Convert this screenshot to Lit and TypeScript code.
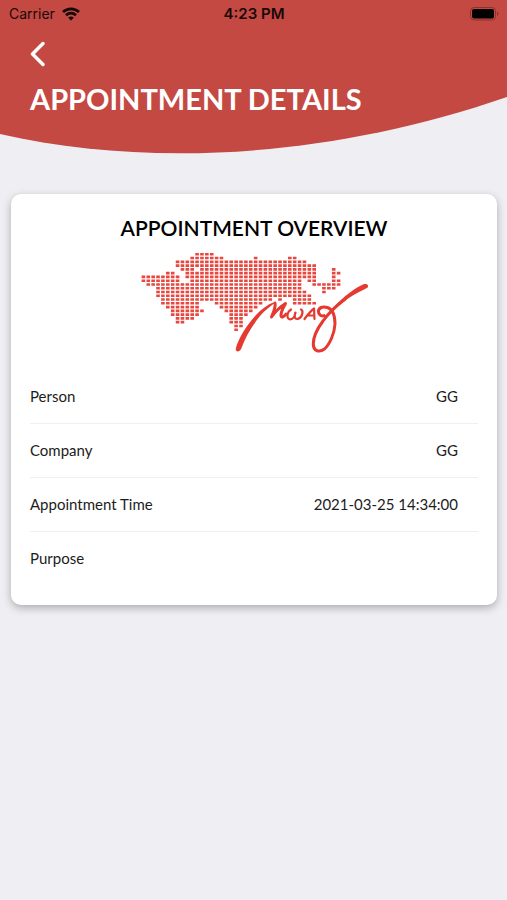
import { LitElement, html, svg, css } from "lit";
import { customElement, property } from "lit/decorators.js";

// Each entry: grid row of the emblem, then inclusive column spans.
const DOT_ROWS: number[][][] = [
  [[11, 14]],
  [[10, 16], [23, 23], [30, 31]],
  [[7, 33]],
  [[7, 35]],
  [[8, 10], [12, 35], [39, 39]],
  [[5, 6], [9, 35], [39, 40]],
  [[0, 7], [9, 35], [39, 39]],
  [[0, 7], [10, 32], [34, 35], [39, 40]],
  [[1, 32], [35, 40]],
  [[3, 32], [37, 39]],
  [[3, 33], [37, 37]],
  [[3, 34]],
  [[4, 26], [28, 28], [31, 34]],
  [[4, 11], [15, 24], [31, 35]],
  [[5, 11], [16, 23]],
  [[6, 12], [17, 22]],
  [[6, 11], [18, 21]],
  [[7, 10], [18, 20]],
  [[7, 8], [18, 20]],
  [[19, 20]],
  [[19, 19]],
];

@customElement("brand-emblem")
class BrandEmblem extends LitElement {
  static styles = css`
    :host { display: block; width: 228px; }
    svg { display: block; width: 100%; }
  `;
  render() {
    const d = DOT_ROWS.map((spans, r) =>
      spans.map(([a, b]) => {
        let s = "";
        for (let c = a; c <= b; c++)
          s += `M${(1.6 + c * 4.88).toFixed(2)} ${(1 + r * 3.77).toFixed(2)}h3.6v2.6h-3.6z`;
        return s;
      }).join("")).join("");
    return html`<svg viewBox="0 0 228 101" role="img" aria-label="MWAG">
      ${svg`<path d=${d} fill="#e8473f"/>
      <path fill="#e53a31" d="M96 96C98 87 108 71 118 61C124 55 130 51 136 50C131 54 125 58 120 64C111 75 105 86 101.500 96C100 101 94.500 100 96 96Z"/>
      <g fill="none" stroke="#e53a31" stroke-linecap="round" stroke-linejoin="round">
        <path stroke-width="3" d="M135 51C136 55 134 59 131.500 65C135 60 140 55 145.500 51.500C143 56 140.500 60 141 64C141.500 66 144 65 146 62"/>
        <path stroke-width="2.200" d="M151 57.500C147 60 146 67 150 67.300C153 67.500 155 64 155.500 60.500C153.500 65 155 67.500 158 66.800C162 66 164 59 161 57.500M164.500 67C167.500 63 170.500 59 174 56.500L174.500 67M168 63.500H174"/>
        <path stroke-width="3" d="M184 63.500C181 65 178 62 178.500 58.500C179.500 55 184 54.500 187.500 55.500C193 57.500 195 64 195 72C194.500 81 190 92 184.500 97C179 101 174 99 173.300 93C173 86 177 77 183 69C188 62 196 54 205 47"/>
      </g>
      <path fill="#e53a31" d="M190 59C199 49 211 38 223 32.500C228 30.500 230 35 226 36.500C214 42 203 49 191 61Z"/>`}
    </svg>`;
  }
}

@customElement("status-bar")
class StatusBar extends LitElement {
  static styles = css`
    :host {
      display: grid; grid-template-columns: 1fr auto 1fr; align-items: center;
      height: 28px; padding: 0 8px 0 9px; color: #180808;
      font: 15px/20px Inter, "Liberation Sans", sans-serif;
    }
    .carrier { display: flex; align-items: center; gap: 7px; font-size: 14px; }
    .time { font-weight: 600; }
    .battery { justify-self: end; }
    svg { display: block; }
  `;
  render() {
    return html`
      <span class="carrier">Carrier
        <svg width="18" height="14" viewBox="0 0 18 14" aria-hidden="true">
          <g fill="none" stroke="#180808" stroke-width="2.700">
            <path d="M1 5C5.500 .8 12.500 .8 17 5"/>
            <path d="M4 8.300C7 5.500 11 5.500 14 8.300"/>
          </g>
          <path d="M9 13.500L6.200 10.700C7.800 9.200 10.200 9.200 11.800 10.700Z" fill="#180808"/>
        </svg>
      </span>
      <span class="time">4:23 PM</span>
      <svg class="battery" width="29" height="14" viewBox="0 0 29 14" aria-hidden="true">
        <rect x=".5" y=".5" width="25" height="12.500" rx="3.500" fill="none" stroke="#8c332e"/>
        <rect x="2" y="2" width="22" height="9.500" rx="2" fill="#000"/>
        <path d="M27 4.500v4.500q1.500-.8 1.500-2.250t-1.500-2.250z" fill="#8c332e"/>
      </svg>`;
  }
}

@customElement("page-header")
class PageHeader extends LitElement {
  @property() heading = "";
  static styles = css`
    :host { display: grid; color: #fff; }
    .curve, .content { grid-area: 1 / 1; }
    .curve { display: block; width: 100%; height: 154px; }
    .content { display: flex; flex-direction: column; align-items: flex-start; }
    status-bar { align-self: stretch; }
    .back {
      margin: 10px 0 0 26px; padding: 0 4px; border: 0; background: none;
      color: inherit; cursor: pointer;
    }
    .back svg { display: block; }
    h1 { margin: 11px 30px 0; font: 700 29px/40px Lato, sans-serif; }
  `;
  render() {
    return html`
      <svg class="curve" viewBox="0 0 507 154" preserveAspectRatio="none" aria-hidden="true">
        <path d="M0 0H507V97C330 158 150 168 0 134Z" fill="#c44943"/>
      </svg>
      <div class="content">
        <status-bar></status-bar>
        <button class="back" aria-label="Back">
          <svg width="16" height="30" viewBox="0 0 16 30" fill="none" stroke="currentColor"
            stroke-width="3.500" stroke-linecap="round" stroke-linejoin="round">
            <path d="M13 5.500L2.500 16L13 26.500"/>
          </svg>
        </button>
        <h1>${this.heading}</h1>
      </div>`;
  }
}

@customElement("app-root")
class AppRoot extends LitElement {
  private details = [
    { label: "Person", value: "GG" },
    { label: "Company", value: "GG" },
    { label: "Appointment Time", value: "2021-03-25 14:34:00" },
    { label: "Purpose", value: "" },
  ];
  static styles = css`
    :host {
      display: block; min-height: 100vh; background: #efeef3; color: #000;
      font: 15px/20px Lato, sans-serif;
    }
    .card {
      margin: 40px 10px 0 11px; padding: 20px 19px; border-radius: 10px;
      background: #fff; box-shadow: 0 3px 8px rgba(0, 0, 0, 0.28);
    }
    h2 { margin: 0 0 10px; text-align: center; font: 600 21px/28px Lato, sans-serif; }
    brand-emblem { margin: 0 auto; }
    dl { margin: 17px 0 0; }
    .row {
      display: flex; justify-content: space-between; padding: 16px 20px 17px 0;
      min-height: 20px; color: #1c1c1c;
    }
    .row + .row { border-top: 1px solid #efefef; }
    dd { margin: 0; }
  `;
  render() {
    return html`
      <page-header heading="APPOINTMENT DETAILS"></page-header>
      <main class="card">
        <h2>APPOINTMENT OVERVIEW</h2>
        <brand-emblem></brand-emblem>
        <dl>
          ${this.details.map((d) => html`<div class="row"><dt>${d.label}</dt><dd>${d.value}</dd></div>`)}
        </dl>
      </main>`;
  }
}
